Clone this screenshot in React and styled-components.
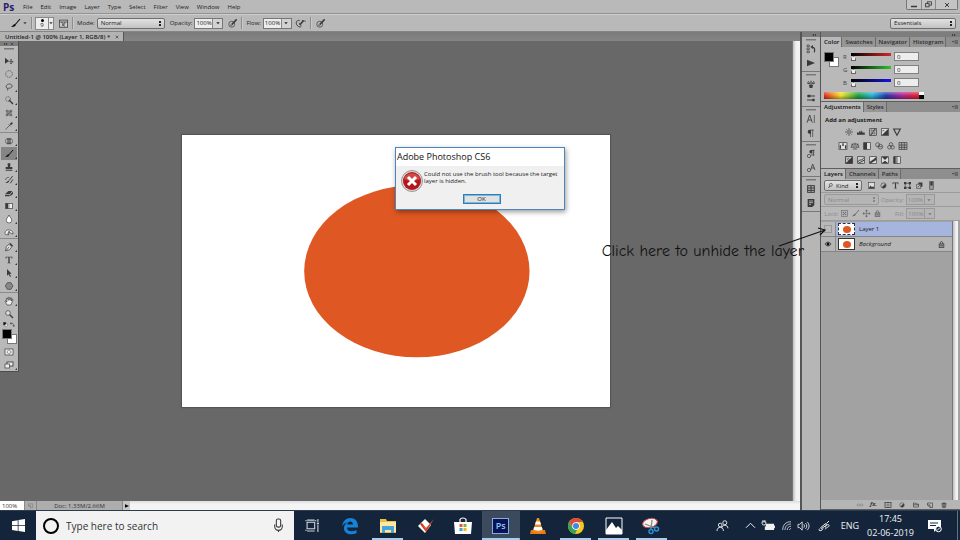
import React from "react";
import styled, { createGlobalStyle } from "styled-components";

const Global = createGlobalStyle`
  * { box-sizing: border-box; }
  html, body { margin: 0; height: 100%; overflow: hidden; }
  #root { height: 100%; }
  body { font-family: "Open Sans", "Noto Sans", sans-serif; font-size: 6px; line-height: 8px; color: #222; background: #666; }
  button, input, select { font: inherit; color: inherit; margin: 0; padding: 0; border: 0; border-radius: 0; background: none; min-width: 0; }
  select { appearance: none; }
`;

/* ---------- icons ---------- */

const Svg = styled.svg`
  display: block;
  flex: none;
  fill: none;
  stroke: currentColor;
  stroke-width: 1;
  overflow: visible;
`;

const F = { fill: "currentColor", stroke: "none" };

const glyphs = {
  move: <><path {...F} d="M0 1l6 5-6 4z" /><path d="M5.500 7h6.500M9 3.500v7" /><path {...F} d="M9 3l1.500 2h-3zM9 11l1.500-2h-3zM13 7l-2-1.500v3z" /></>,
  marquee: <circle cx="6" cy="6" r="5" strokeDasharray="2 1" />,
  lasso: <path strokeWidth="1.200" d="M3.500 8C0 6 2 1.500 6.500 1.500S12.500 6 8 7.500C5 8.500 3 7 3.500 8.500S5 10 3 11.500" />,
  wand: <><circle cx="4.500" cy="4.500" r="3.500" strokeDasharray="2 1" /><path strokeWidth="2" d="M6 6l6 6" /></>,
  crop: <><path d="M3 1v10M9 1v10M1 3h10M1 9h10" /><path strokeWidth=".6" d="M3 9l6-6M6 3v6M3 6h6" /></>,
  dropper: <><path strokeWidth="2.600" d="M8 4l3-3" /><path d="M5.500 3.500l3 3M7 5L2 10l-1 1.500" /></>,
  patch: <><rect x="1" y="3" width="10" height="6.500" rx="2" fill="#ccc" /><rect x="3.500" y="2" width="5" height="8.500" fill="currentColor" opacity=".6" /></>,
  brush: <><path strokeWidth="1.500" d="M12 0L6 7" /><path {...F} d="M6.500 6.500C7 9.500 4 11 0 10.500 3 9.500 3 6 6.500 6.500z" /></>,
  stamp: <path {...F} d="M4 .5h4v3L7.500 6H11v3H1V6h3.500L4 3.500zM1 10h10v1.500H1z" />,
  history: <><path strokeWidth="1.400" d="M11.500 0L6 7M12 5L8 11" /><path {...F} d="M6.500 7C6 10 3 11 0 10.500c3-.5 3-3.500 6.500-3.500z" /><path d="M1 6c0-3 2-4 5-4" /></>,
  eraser: <path {...F} d="M0 8l5-5h6L7 8zM0 9h7v2H0zM8 8l4-4v3l-4 4z" />,
  gradient: <><rect x="1" y="2" width="10" height="8" fill="#eee" /><path {...F} d="M1 2h4v8H1z" /><path d="M6.500 2v8" opacity=".5" /></>,
  drop: <path fill="#fff" d="M6 0c1 3 4 5 4 8a4 4 0 01-8 0c0-3 3-5 4-8z" />,
  sponge: <><path fill="#eee" d="M0 8c0-4 3-6 7-5s5 3 5 6l-5-2-3 1 2 2H1z" /><circle cx="6" cy="6" r="1" /></>,
  pen: <><path fill="#ddd" d="M1 12l1-7 4-3 4 4-3 4-6 2zM1 12l5-6" /><path strokeWidth="2" d="M7 .5l4.500 4.500" /></>,
  type: <path {...F} d="M1 1h10v3h-.7C10 2.500 9.500 2 8 2H7v7.500c0 .8.500 1 1.500 1v.5h-5v-.5c1 0 1.500-.2 1.500-1V2H4C2.500 2 2 2.500 1.700 4H1z" />,
  select: <path {...F} d="M3 0l7 7H7l2 4-1.500 1L5.500 8 3 10z" />,
  shape: <path fill="#888" d="M3.500 1h5.500L12 6l-3 5H3.500L.5 6z" />,
  hand: <path fill="#eee" d="M3 12L0 6l1-.5 2 2L2 2l1.500-.5L5 5V.5h1.500L7.500 5 8.500 1l1 .2V6l1.500-3 1 .5L10.500 8 9 12z" />,
  zoom: <><circle cx="4.500" cy="4.500" r="3.500" fill="#ddd" /><path strokeWidth="2" d="M7 7l5 5" /></>,
  mini: <><rect x="1" y="1" width="6" height="6" fill="#111" /><rect x="5" y="5" width="6" height="6" fill="#fff" /></>,
  swap: <path strokeWidth="1.500" d="M2 6V2l-1 2m1-2l2 1M2 3c5-1 7 2 7 7m-2-2l2 3 2-3" />,
  mask: <><rect x="0" y="1.500" width="12" height="9" fill="#eee" /><circle cx="6" cy="6" r="2.800" strokeDasharray="2 .8" /></>,
  screen: <><rect x="3" y="1.500" width="9" height="6" fill="#eee" strokeWidth="1.300" /><rect x="0" y="4.500" width="7" height="6" fill="#eee" /></>,
  panel: <><rect x=".5" y="1.500" width="11" height="9.500" fill="#ccc" /><path d="M1 4h10M3 4l3 3 2-3M4 7l4 3M4 10l4-4" /></>,
  pressure: <><circle cx="5" cy="7" r="4" strokeWidth=".9" /><path strokeWidth="2" d="M5 7.500l6.500-7" /><path d="M2.500 7.500l3 2" /></>,
  airbrush: <><path strokeWidth="1.200" d="M5 2C0 1 -1 6 2 9s5 1 5 1" /><path strokeWidth="2" d="M5 8l5-6" /><path d="M8 2l5 1M4 5l3 4" /></>,
  steps: <><path d="M0 0h3.500v2.500H0zM0 4.500h3.500V7H0zM0 9h3.500v2.500H0z" /><path strokeWidth="1.800" d="M8 3c4 1 4 4 3 8" /><path {...F} d="M5 3l4-3v6z" /></>,
  play: <path {...F} d="M0 1l12 5-12 5z" />,
  brushes: <><path {...F} d="M3 7h6l-1 5H4z" /><path strokeWidth="1.500" d="M6 7V1M4.500 6L2 2M7.500 6L10 2M0 4l3 2M12 4L9 6" /></>,
  sliders: <><path strokeWidth="1.500" d="M0 3h12M0 9h12" /><path {...F} d="M1 1h4v4H1zM8 7h3v4H8z" /></>,
  letter: <><path strokeWidth="1.300" d="M0 11.500L4 0l4 11.500M1.500 7.500h5" /><path d="M11 0v12" /></>,
  para: <><path {...F} d="M6 1H4a3 3 0 000 6h1v5h1z" /><path d="M6 1.500h4M8.500 1v11" /></>,
  paraStyle: <><path {...F} d="M8 0H6a2.500 2.500 0 000 5h1v4h1z" /><path strokeWidth="1.300" d="M7 .5h4M10 0v9" /><circle cx="3" cy="9" r="2.500" /></>,
  letterStyle: <><path strokeWidth="1.200" d="M5.500 9L8.500 0 12 9M7 6h4" /><circle cx="3" cy="9" r="2.500" /></>,
  boxes: <><rect x="1" y="1" width="10" height="10" strokeWidth="1.500" /><path strokeWidth="1.500" d="M1 4.500h10M1 8h10M6 1v10" /></>,
  note: <><path {...F} d="M1 0h10v9l-3 3H1z" /><path stroke="#ddd" d="M3 3h6M3 5.500h6M3 8h3" /></>,
  sun: <><circle cx="6" cy="6" r="2" /><path d="M6 0v3M6 9v3M0 6h3M9 6h3M2 2l2 2M8 8l2 2M10 2L8 4M4 8l-2 2" /></>,
  levels: <path {...F} d="M0 10V7l1-1 1 2 2-4 1 3 1-4 2 4 1-2 1 3 1-2 1 4z" />,
  curves: <><rect x="1" y="1" width="10" height="10" /><path strokeWidth=".5" d="M4 1v10M8 1v10M1 4h10M1 8h10" /><path strokeWidth="1.300" d="M1 11C8 10 4 2 11 1" /></>,
  exposure: <><rect x=".5" y="1" width="11" height="10" fill="#ddd" /><path {...F} d="M1 11L11 1v10z" /><path d="M2 4h3" /></>,
  triangle: <path strokeWidth="1.700" d="M1 1.500h10L6 11z" />,
  hue: <><rect x="0" y="1" width="12" height="10" fill="#ddd" /><path {...F} d="M1 5h2v5H1zM5 2h2v4H5zM9 5h2v5H9z" /></>,
  scales: <path d="M6 1v9M3 10.500h6M1 3h10M2 3L0 8h4zM10 3L8 8h4z" />,
  bw: <><rect x="1" y="1" width="10" height="10" fill="#ddd" /><path {...F} d="M1 1h5v10H1z" /></>,
  grade: <><rect x="1" y="1" width="10" height="10" fill="#ddd" /><path {...F} d="M1 1h3v10H1z" /><path {...F} opacity=".5" d="M4 1h3v10H4z" /></>,
  filter: <><circle cx="4" cy="4" r="3" /><circle cx="8" cy="7" r="3.500" /><path d="M5 7h6" /></>,
  mixer: <><circle cx="6" cy="3.500" r="2.600" /><circle cx="3.500" cy="8" r="2.600" /><circle cx="8.500" cy="8" r="2.600" /></>,
  grid: <><rect x="0" y="1" width="12" height="10" fill="#aaa" /><path d="M4 1v10M8 1v10M0 4.500h12M0 8h12" /></>,
  invert: <><rect x="1" y="1" width="10" height="10" strokeWidth="1.500" fill="#ddd" /><path {...F} d="M1 11L11 1v10z" /><circle cx="5" cy="5" r="1.500" /></>,
  poster: <><rect x="1" y="1" width="10" height="10" fill="#ccc" /><path strokeWidth="1.500" d="M1 9l3-3h3l4-4M2 11l4-2 5-3" /></>,
  thresh: <><rect x="1" y="1" width="10" height="10" fill="#ddd" /><path {...F} d="M1 9l4-3 2-1 4-4v5l-5 3-5 3z" /></>,
  selective: <><rect x="1" y="1" width="10" height="10" fill="#ddd" /><path {...F} d="M1 1h10L6 6zM1 11l5-4 5 4z" /></>,
  picture: <><rect x=".5" y="1" width="11" height="10" fill="#ddd" /><path {...F} d="M1 11l3-5 3 3 2-2 2 4z" /></>,
  half: <><circle cx="6" cy="6" r="4.500" /><path {...F} d="M9 3l-6 6a4 4 0 006-6z" /></>,
  frame: <><rect x="2" y="2" width="8" height="8" /><path {...F} d="M0 0h4v4H0zM8 0h4v4H8zM0 8h4v4H0zM8 8h4v4H8z" /></>,
  smart: <><path d="M1 4h7v7H1z" /><path {...F} d="M4 1h7v7H8V4H4z" /><path d="M3 9l4-4" /></>,
  toggle: <><rect x="3" y="-1" width="6" height="14" fill="#999" /><path {...F} d="M4 0h4v6H4z" /></>,
  checker: <><rect x="1" y="1" width="10" height="10" /><path {...F} d="M3 3h2v2H3zM7 3h2v2H7zM5 5h2v2H5zM3 7h2v2H3zM7 7h2v2H7z" /></>,
  cross: <><path d="M6 1v10M1 6h10" /><path {...F} d="M6-1l2.500 3h-5zM6 13l2.500-3h-5zM-1 6l3-2.500v5zM13 6l-3-2.500v5z" /></>,
  lock: <><rect x="2" y="5" width="8" height="6" fill="#999" strokeWidth="1.300" /><path strokeWidth="1.300" d="M4 5V3a2 2 0 014 0v2M4 8h4" /></>,
  eye: <><path strokeWidth="1.300" d="M0 6c3-5 9-5 12 0-3 5-9 5-12 0z" /><circle {...F} cx="6" cy="6" r="3" /></>,
  link: <><rect x="0" y="4" width="5.500" height="4" rx="2" /><rect x="6.500" y="4" width="5.500" height="4" rx="2" /></>,
  addmask: <><rect x="0" y="1" width="12" height="10" strokeWidth="1.500" /><circle cx="6" cy="6" r="2.500" /></>,
  folder: <path strokeWidth="1.300" d="M1 10V2h4l1 2h5v6zM1 5.500h10" />,
  page: <path strokeWidth="1.300" d="M1 2h10v9H6L1 6zM6 11V6H1" />,
  trash: <path strokeWidth="1.300" d="M2 4h8l-1 7H3zM1 3h10M4 1.500h4M5 5v5M7 5v5" />,
  menu: <><path {...F} d="M0 4h4L2 7z" /><path d="M5 3h7M5 5h7M5 7h7M5 9h7" strokeWidth=".8" /></>,
  chevL: <path {...F} d="M6 2v8L1 6zM12 2v8L7 6z" />,
  chevR: <path {...F} d="M0 2v8l5-4zM6 2v8l5-4z" />,
  caret: <path {...F} d="M1 4h10L6 10z" />,
  search: <><circle cx="7" cy="4.500" r="3.500" strokeWidth="1.500" /><path strokeWidth="2" d="M5 7l-4 5" /></>,
  x: <path strokeWidth="2" d="M2 2l8 8M10 2l-8 8" />,
  min: <path strokeWidth="3" d="M0 9h12" />,
  restore: <><rect x="4" y="1.500" width="7" height="5.500" strokeWidth="1.500" /><rect x="1" y="4.500" width="6" height="5.500" fill="#bbb" strokeWidth="1.500" /></>,
  windows: <path {...F} d="M0 2l5.300-.8v4.500H0zM6 1l6-.9v5.600H6zM0 6.400h5.300V11L0 10.200zM6 6.400h6V12l-6-.9z" />,
  mic: <><rect x="4" y="0" width="4" height="7.500" rx="1.500" /><path d="M2.500 5v2a3.500 3.500 0 007 0V5M6 10.500V12" /></>,
  taskview: <><rect x="1" y="3" width="7" height="6" /><path d="M1 1h7M1 11h7M0 1v1M9 1v1M0 10v1M11 0v3M11 5v7M10 4h2" /></>,
  people: <><circle cx="8.500" cy="3" r="2.200" /><circle cx="3.500" cy="5.500" r="2" /><path d="M5 9c.5-4 6.500-4.500 7 0M0 12c0-5.500 7-5.500 7 0" /></>,
  up: <path strokeWidth="1.300" d="M0 9l6-6 6 6" />,
  battery: <><path {...F} d="M3 4h9v7H2V7h1zM12 6h1v3h-1z" /><path d="M-1 2h4v2c0 2-4 2-4 0zM0 0v2M2 0v2" /></>,
  wifi: <path d="M1 12C1 5 5 1 12 1M4 12c0-5 3-8 8-8M7 12c0-3 2-5 5-5M10 12c0-1 1-2 2-2" />,
  volume: <path d="M0 4h2l3-3v10L2 8H0zM7 4c1 1 1 3 0 4M9 2.500c2 2 2 5 0 7M11 1c3 3 3 7 0 10" />,
  ink: <path strokeWidth="1.200" d="M2 8l6-5 1 2-6 4zM9 3l3-3M1 9c-3 3 2 4 4 0M7 10c3-3 6-3 5-5S7 6 8 8" />,
  action: <><path {...F} d="M0 0h13v9H9l-3 3V9H0z" /><path stroke="#16283f" d="M2 3h8M2 5.500h6" /><circle cx="10.500" cy="9" r="2.800" fill="#16283f" /><path d="M9 10.500l3-3" /></>,
};

const Icon = ({ name, size = 9, color = "#3a3a3a" }) => (
  <Svg width={size} height={size} viewBox="0 0 12 12" color={color} aria-hidden="true">{glyphs[name]}</Svg>
);

const AppGlyphs = {
  edge: <path fill="#1683d8" d="M0 8C1 3 4 0 8.500 0c5 0 7.500 4 7.500 8.500v1H5c0 4 5 5 9.500 2.500v3.200C8 18 1.500 15.500 2 9.500 2.300 7 4 5 6 4.200 3.500 4.500 1.300 6 0 8zm5.200-1.500H11C11 2.500 5.500 2.500 5.200 6.500z" />,
  explorer: <><path fill="#e9bf50" d="M0 1h6l1 2h9v12H0z" /><path fill="#ffe9a0" d="M0 4h16v10H0z" /><path fill="#45a5dc" d="M2 8h12v7h-3v-3H5v3H2z" /></>,
  check: <><path fill="#fff" d="M7 1l6 6-6 8-7-7z" /><path fill="#c8371b" d="M2 6l2-1 4 5 8-9-8 13z" /><path fill="#ff9a3c" d="M4 6l4 5 8-10-7 8-1 3z" /></>,
  store: <><path fill="#fff" d="M-1 4h18l-1 12H0z" /><path fill="none" stroke="#fff" strokeWidth="1.200" d="M5 4V1.500C6-.5 10-.5 11 1.500V4" /><path fill="#e9532d" d="M4.500 6h3v3h-3z" /><path fill="#80b82d" d="M8.500 6h3v3h-3z" /><path fill="#2ca5e0" d="M4.500 10h3v3h-3z" /><path fill="#f5b51d" d="M8.500 10h3v3h-3z" /></>,
  vlc: <><path fill="#e87c13" d="M1 12h14l1 4H0z" /><path fill="#f08a20" d="M7 0h2l4 13c-2 2-8 2-10 0z" /><path fill="#fff" d="M6 3.500h4l1 3H5zM4.200 9h7.600l.8 2.500c-2 1.500-7 1.500-9.200 0z" /></>,
  chrome: <><circle cx="8" cy="8" r="8" fill="#f5c923" /><path fill="#de4a3b" d="M1.100 4A8 8 0 0114.900 4H8L5 10z" /><path fill="#33a35a" d="M1.100 4l3.500 6L9 12l-2 4A8 8 0 011.100 4z" /><circle cx="8" cy="8" r="3.800" fill="#fff" /><circle cx="8" cy="8" r="3" fill="#4387e8" /></>,
  photos: <><path fill="none" stroke="#fff" d="M0 0h16v16H0z" /><path fill="#fff" d="M0 12l6-8 4 6 2-2 4 4v4H0z" /></>,
  snip: <><ellipse cx="7" cy="5" rx="7.500" ry="4.500" fill="#f4f1f1" stroke="#c64646" transform="rotate(-14 7 5)" /><path stroke="#888" strokeWidth="1.300" d="M2 6l10 4M9 2l-1 9" /><g fill="none" stroke="#2194d8" strokeWidth="1.500"><circle cx="8" cy="13.500" r="2" /><circle cx="13.500" cy="11" r="2" /></g></>,
};

/* ---------- shared controls ---------- */

const Screen = styled.div`
  position: relative;
  display: flex;
  flex-direction: column;
  height: 100vh;
  overflow: hidden;
`;

const Divider = styled.span`
  width: 2px;
  height: 12px;
  flex: none;
  background: #8d8d8d;
  border-right: 1px solid #c9c9c9;
  margin: 0 ${(p) => p.$gap}px;
`;

const PlainButton = styled.button`
  display: flex;
  align-items: center;
  justify-content: center;
  white-space: nowrap;
  flex: none;
`;

const Dropdown = styled.span`
  display: flex;
  align-items: center;
  flex: none;
  width: ${(p) => p.$w}px;
  height: 11px;
  border: 1px solid ${(p) => (p.$off ? "#999" : "#6f6f6f")};
  border-radius: 2px;
  background: ${(p) => (p.$off ? "#b5b5b5" : "linear-gradient(#e2e2e2, #c2c2c2)")};
  color: ${(p) => (p.$off ? "#888" : "#222")};
  select { flex: 1; height: 100%; padding-left: ${(p) => (p.$tight ? 0 : 3)}px; opacity: 1; }
  &::after {
    content: "";
    width: 2px;
    height: 5px;
    margin-right: 3px;
    background: linear-gradient(currentColor 2px, transparent 2px 3px, currentColor 3px);
    pointer-events: none;
  }
`;

const ValueBox = styled.span`
  display: flex;
  flex: none;
  height: 11px;
  border: 1px solid ${(p) => (p.$off ? "#999" : "#777")};
  background: ${(p) => (p.$off ? "#b5b5b5" : "#ededed")};
  color: ${(p) => (p.$off ? "#888" : "#222")};
  input { width: 17px; padding-left: 1px; }
  button { width: 10px; border-left: 1px solid ${(p) => (p.$off ? "#999" : "#888")}; background: ${(p) => (p.$off ? "#b5b5b5" : "#d2d2d2")}; }
`;

const Percent = ({ id, off }) => (
  <ValueBox $off={off}>
    <input id={id} defaultValue="100%" disabled={off} />
    <PlainButton aria-label="Open slider"><Icon name="caret" size={4} color={off ? "#777" : "#222"} /></PlainButton>
  </ValueBox>
);

/* ---------- menu and options bars ---------- */

const MenuBar = styled.header`
  display: flex;
  align-items: center;
  flex: none;
  height: 14px;
  padding-left: 3px;
  background: #b9b9b9;
  border-bottom: 1px solid #929292;
`;

const Brand = styled.strong`
  width: 20px;
  font-size: 10px;
  line-height: 12px;
  color: #29206b;
`;

const Menus = styled.nav`
  display: flex;
  flex: 1;
  gap: 8px;
`;

const WindowButtons = styled.div`
  display: flex;
  align-self: flex-start;
  height: 10px;
  margin-right: 2px;
  border: 1px solid #777;
  border-top: 0;
  border-radius: 0 0 2px 2px;
  background: #c4c4c4;
  button { width: 14px; }
  button + button { border-left: 1px solid #888; }
  button:last-child { width: 22px; }
`;

const OptionsBar = styled.div`
  display: flex;
  align-items: center;
  flex: none;
  height: 18px;
  padding: 0 4px 0 9px;
  background: #b9b9b9;
  border-top: 1px solid #cfcfcf;
  border-bottom: 1px solid #858585;
  label { margin: 0 2px 0 3px; }
`;

const BrushPreset = styled.div`
  display: flex;
  flex: none;
  width: 19px;
  height: 13px;
  border: 1px solid #888;
  background: #ececec;
  button { width: 5px; border-left: 1px solid #888; }
`;

const BrushTip = styled.span`
  display: flex;
  flex: 1;
  flex-direction: column;
  align-items: center;
  line-height: 7px;
  &::before { content: ""; width: 3px; height: 3px; margin-top: 1px; border-radius: 50%; background: #000; }
`;

const Slot = styled.span`
  display: flex;
  justify-content: center;
  align-items: center;
  flex: none;
  width: ${(p) => p.$w}px;
`;

const Spring = styled.span`
  flex: 1;
`;

/* ---------- document area ---------- */

const Workspace = styled.main`
  display: flex;
  flex: 1;
  min-height: 0;
`;

const DocumentColumn = styled.section`
  display: flex;
  flex: 1;
  flex-direction: column;
  min-width: 0;
`;

const TabStrip = styled.div`
  display: flex;
  flex: none;
  height: 9px;
  background: linear-gradient(#7b7b7b, #858585);
`;

const DocumentTab = styled.div`
  display: flex;
  align-items: center;
  gap: 5px;
  padding: 0 4px 0 5px;
  background: #b3b3b3;
  border-right: 1px solid #555;
  font-weight: 600;
  white-space: nowrap;
`;

const Viewport = styled.div`
  position: relative;
  display: flex;
  flex: 1;
  min-height: 0;
  background: #686868;
`;

const Pasteboard = styled.div`
  display: flex;
  flex: 1;
  align-items: center;
  justify-content: center;
`;

const Artboard = styled.svg`
  width: 54%;
  background: #fff;
  box-shadow: 0 0 1px 1px #555;
`;

const VScroll = styled.div`
  width: 8px;
  flex: none;
  background: linear-gradient(90deg, #bdbdbd, #f1f1f1 3px, #f4f4f4);
  border-left: 1px solid #777;
`;

const ListScroll = styled(VScroll)`
  border-right: 2px solid #a2a2a2;
`;

const StatusBar = styled.footer`
  display: flex;
  flex: none;
  height: 9px;
  background: linear-gradient(#ddd, #f4f4f4 3px);
  color: #333;
  input { width: 24px; padding-left: 2px; background: #fff; }
`;

const StatusPart = styled.div`
  display: flex;
  align-items: center;
  justify-content: center;
  width: ${(p) => p.$w}px;
  background: ${(p) => p.$bg || "#adadad"};
  border-left: 1px solid #888;
`;

/* ---------- tool palette ---------- */

const Palette = styled.aside`
  position: absolute;
  left: 0;
  top: 0;
  width: 19px;
  background: #b9b9b9;
  border-right: 1px solid #4d4d4d;
  border-bottom: 1px solid #4d4d4d;
`;

const DarkHead = styled.div`
  display: flex;
  align-items: center;
  justify-content: ${(p) => p.$align || "space-between"};
  flex: none;
  height: 5px;
  padding: 0 4px;
  background: #7d7d7d;
`;

const Grip = styled.div`
  width: 10px;
  height: 2px;
  margin: 2px auto ${(p) => p.$after}px;
  border-top: 1px solid #777;
  background: #999;
`;

const ToolGroup = styled.div`
  padding-top: 1px;
  & + & { border-top: 1px solid #8a8a8a; }
`;

const Tool = styled.button`
  position: relative;
  display: flex;
  align-items: center;
  justify-content: center;
  width: 16px;
  height: 13px;
  margin: 0 1px;
  background: ${(p) => (p.$on ? "#858585" : "none")};
  &::after { content: ${(p) => (p.$more ? '""' : "none")}; position: absolute; right: 0; bottom: 1px; border: 1px solid #333; border-top-color: transparent; border-left-color: transparent; }
`;

const Swatches = styled.div`
  display: grid;
  grid-template: repeat(3, 5px) / repeat(3, 5px);
  width: 15px;
  margin: ${(p) => p.$margin};
`;

const Swatch = styled.button`
  grid-area: ${(p) => (p.$front ? "1 / 1 / 3 / 3" : "2 / 2 / 4 / 4")};
  background: ${(p) => (p.$front ? "#000" : "#fff")};
  border: 1px solid #777;
  z-index: ${(p) => (p.$front ? 1 : 0)};
`;

const MiniRow = styled.div`
  display: flex;
  justify-content: space-between;
  padding: 2px 3px;
  height: 9px;
`;

/* ---------- docks ---------- */

const IconDock = styled.aside`
  display: flex;
  flex-direction: column;
  width: 20px;
  flex: none;
  background: #b6b6b6;
  border-left: 2px solid #555;
`;

const DockGroup = styled.div`
  display: flex;
  flex-direction: column;
  align-items: center;
  height: 35px;
  border-bottom: 1px solid #777;
  button { height: 14px; width: 16px; }
`;

const Panels = styled.aside`
  display: flex;
  flex-direction: column;
  width: 140px;
  flex: none;
  border-left: 1px solid #555;
  background: #a2a2a2;
`;

const Panel = styled.section`
  display: flex;
  flex-direction: column;
  flex: ${(p) => (p.$grow ? "1" : "none")};
  height: ${(p) => (p.$h ? p.$h + "px" : "auto")};
  border-bottom: 1px solid #5e5e5e;
`;

const Tabs = styled.div`
  display: flex;
  flex: none;
  height: 10px;
  background: #8e8e8e;
`;

const Tab = styled.button`
  padding: 0 2px 0 3px;
  font-weight: 600;
  line-height: 9px;
  white-space: nowrap;
  color: ${(p) => (p.$on ? "#111" : "#2e2e2e")};
  background: ${(p) => (p.$on ? "#b9b9b9" : "#969696")};
  border-right: 1px solid #6b6b6b;
`;

const PanelBody = styled.div`
  flex: 1;
  background: #b9b9b9;
`;

const PanelTabs = ({ names }) => (
  <Tabs role="tablist">
    {names.map((n, i) => <Tab key={n} role="tab" aria-selected={i === 0} $on={i === 0}>{n}</Tab>)}
    <Spring />
    <Slot $w={10}><Icon name="menu" size={6} color="#333" /></Slot>
  </Tabs>
);

const ColorBody = styled(PanelBody)`
  display: grid;
  grid-template-columns: 18px 1fr;
  grid-template-rows: 39px 1fr;
  row-gap: 3px;
  padding: 3px 3px 2px;
`;

const ChannelRow = styled.div`
  display: grid;
  grid-template-columns: 9px 40px 28px;
  height: 13px;
  align-items: center;
  label { padding-left: 1px; color: #444; }
  input[type="text"] { height: 9px; margin-left: 3px; width: 25px; border: 1px solid #808080; background: #ededed; padding-left: 2px; }
`;

const Channel = styled.input`
  appearance: none;
  width: 40px;
  height: 9px;
  background: linear-gradient(90deg, #000, ${(p) => p.$color}) 0 1px / 100% 3px no-repeat;
  &::-webkit-slider-thumb { appearance: none; width: 5px; height: 5px; margin-top: 4px; background: #eee; border: 1px solid #666; clip-path: polygon(50% 0, 100% 50%, 100% 100%, 0 100%, 0 50%); }
`;

const Spectrum = styled.div`
  grid-column: 1 / -1;
  width: 100px;
  height: 7px;
  background:
    linear-gradient(#fff 50%, #000 50%) right / 5px 100% no-repeat,
    linear-gradient(rgba(255,255,255,.35), transparent 50%, rgba(0,0,0,.35)),
    linear-gradient(90deg, #e12a22, #f3df27 17%, #20a040 34%, #28b6d4 48%, #283caa 62%, #b0259a 78%, #dd2434 92%);
`;

const AdjustRow = styled.div`
  display: flex;
  justify-content: center;
  gap: 1px;
  height: 14px;
  align-items: center;
  width: 84px;
  margin-left: 10px;
  button { width: 11px; }
`;

const Heading = styled.h2`
  margin: 0;
  padding: 3px 4px 0;
  font-size: 6px;
  line-height: 10px;
  font-weight: 700;
`;

const LayerRowBar = styled.div`
  display: flex;
  align-items: center;
  height: 14px;
  padding: 0 3px;
  border-bottom: 1px solid #9c9c9c;
  color: ${(p) => (p.$off ? "#8a8a8a" : "#333")};
  label { margin: 0 2px; }
`;

const LayerList = styled.div`
  display: flex;
  flex: 1;
  background: #a2a2a2;
`;

const Layers = styled.ul`
  flex: 1;
  margin: 0;
  padding: 1px 0 0;
  list-style: none;
`;

const Layer = styled.li`
  display: flex;
  align-items: center;
  height: 15px;
  padding-right: 7px;
  border-bottom: 1px solid #858585;
  background: ${(p) => (p.$on ? "linear-gradient(90deg, #b9b9b9 15px, #a5b5dd 15px)" : "#b5b5b5")};
  font-style: ${(p) => (p.$italic ? "italic" : "normal")};
`;

const EyeBox = styled.button`
  display: flex;
  align-items: center;
  justify-content: center;
  width: 15px;
  height: 100%;
  border-right: 1px solid #8c8c8c;
  &::before { content: ${(p) => (p.$empty ? '""' : "none")}; width: 6px; height: 6px; border: 1px solid #999; }
`;

const Thumb = styled.span`
  display: flex;
  align-items: center;
  justify-content: center;
  width: 17px;
  height: 12px;
  margin: 0 4px 0 2px;
  background: #fff;
  border: 1px ${(p) => (p.$on ? "dashed" : "solid")} #333;
  &::after { content: ""; width: 8px; height: 7px; border-radius: 50%; background: #df5823; }
`;

const PanelFooter = styled.footer`
  display: flex;
  align-items: center;
  justify-content: flex-end;
  gap: 1px;
  flex: none;
  height: 9px;
  padding-right: 10px;
  background: #b5b5b5;
  color: #333;
  button { width: 13px; font-style: italic; font-weight: 700; line-height: 7px; }
`;

/* ---------- overlays ---------- */

const Dialog = styled.div`
  position: absolute;
  left: 50%;
  top: 147px;
  width: 170px;
  transform: translateX(-50%);
  background: #f0f0f0;
  border: 1px solid #4d86bd;
  box-shadow: 1px 2px 5px rgba(0, 0, 0, .4);
`;

const DialogTitle = styled.h1`
  margin: 0;
  padding: 0 1px;
  background: #fff;
  font-size: 9px;
  font-weight: 400;
  line-height: 18px;
  color: #111;
`;

const DialogBody = styled.div`
  display: flex;
  gap: 1px;
  padding: 3px 4px 0 5px;
  line-height: 7px;
  svg { flex: none; }
  p { margin: 2px 0 0; }
`;

const DialogActions = styled.div`
  display: flex;
  justify-content: center;
  padding: 1px 0 5px 3px;
  button { width: 38px; height: 10px; border: 1px solid #2a7fb8; background: #e1e1e1; box-shadow: inset 0 0 0 1px #7db8dc; line-height: 8px; }
`;

const Note = styled.div`
  position: absolute;
  right: 133px;
  top: 226px;
  padding-right: 23px;
  color: #111;
  pointer-events: none;
`;

const NoteText = styled.span`
  display: block;
  font-family: "Comic Sans MS", "Comic Neue", "Open Sans", sans-serif;
  font-size: 16px;
  line-height: 18px;
  padding-top: 16px;
  white-space: nowrap;
`;

const Arrow = styled.svg`
  position: absolute;
  right: 0;
  top: 0;
`;

/* ---------- taskbar ---------- */

const Taskbar = styled.footer`
  display: flex;
  align-items: stretch;
  flex: none;
  height: 30px;
  background: #14253b;
  color: #f1f1f1;
  border-top: 1px solid #2d3b4c;
`;

const SearchField = styled.label`
  display: flex;
  align-items: center;
  width: 258px;
  padding: 0 9px 0 7px;
  background: #f2f2f2;
  color: #333;
  input { flex: 1; margin-left: 7px; font-size: 10px; line-height: 14px; outline: 0; }
  input::placeholder { color: #333; opacity: 1; }
`;

const AppStrip = styled.div`
  display: flex;
  width: 376px;
`;

const TaskItem = styled.button`
  display: flex;
  align-items: center;
  justify-content: center;
  flex: 1;
  background-color: ${(p) => (p.$active ? "#3b4a5c" : "transparent")};
  background-image: ${(p) => (p.$open ? "linear-gradient(#a9cdea, #a9cdea)" : "none")};
  background-size: ${(p) => (p.$active ? "100%" : "31px")} 2px;
  background-position: bottom;
  background-repeat: no-repeat;
`;

const PsTile = styled.span`
  width: 17px;
  height: 16px;
  border: 1px solid #7fb0e0;
  background: #0b1256;
  color: #8ec5f5;
  font-size: 9px;
  font-weight: 600;
  line-height: 14px;
`;

const Tray = styled.div`
  display: flex;
  align-items: center;
  padding-right: 2px;
  font-size: 9px;
  button { height: 100%; }
`;

const Clock = styled.time`
  width: 55px;
  margin-right: 2px;
  text-align: center;
  line-height: 14px;
`;

const TrayEdge = styled.span`
  width: 1px;
  height: 100%;
  margin-left: 9px;
  background: #65717f;
`;

const AppIcon = ({ name }) => (
  <svg width="16" height="16" viewBox="0 0 16 16" overflow="visible" aria-hidden="true">{AppGlyphs[name]}</svg>
);

/* ---------- data ---------- */

const toolGroups = [
  ["move", "marquee", "lasso", "wand", "crop", "dropper"],
  ["patch", "brush", "stamp", "history", "eraser", "gradient", "drop", "sponge"],
  ["pen", "type", "select", "shape"],
  ["hand", "zoom"],
];
const dockGroups = [["steps", "play"], ["brushes", "sliders"], ["letter", "para"], ["paraStyle", "letterStyle"], ["boxes", "note"]];
const adjustments = [
  ["sun", "levels", "curves", "exposure", "triangle"],
  ["hue", "scales", "bw", "filter", "mixer", "grid"],
  ["invert", "poster", "thresh", "selective", "grade"],
];
const apps = [
  { name: "edge" }, { name: "explorer", open: true }, { name: "check" }, { name: "store" },
  { name: "ps", open: true, active: true }, { name: "vlc" }, { name: "chrome", open: true },
  { name: "photos", open: true }, { name: "snip", open: true },
];
const tray = [["people", 38, 11], ["up", 18, 9], ["battery", 18, 11], ["wifi", 18, 9], ["volume", 16, 10], ["ink", 26, 10]];

const ColorPair = ({ margin }) => (
  <Swatches $margin={margin}>
    <Swatch $front aria-label="Foreground color" />
    <Swatch aria-label="Background color" />
  </Swatches>
);

export default function App() {
  return (
    <Screen>
      <Global />
      <MenuBar>
        <Brand>Ps</Brand>
        <Menus>
          {["File", "Edit", "Image", "Layer", "Type", "Select", "Filter", "View", "Window", "Help"].map((m) => (
            <PlainButton key={m}>{m}</PlainButton>
          ))}
        </Menus>
        <WindowButtons>
          <PlainButton aria-label="Minimize"><Icon name="min" size={6} /></PlainButton>
          <PlainButton aria-label="Restore"><Icon name="restore" size={7} /></PlainButton>
          <PlainButton aria-label="Close"><Icon name="x" size={6} /></PlainButton>
        </WindowButtons>
      </MenuBar>

      <OptionsBar>
        <Slot $w={12}><Icon name="brush" size={9} color="#111" /></Slot>
        <Slot $w={8}><Icon name="caret" size={4} /></Slot>
        <Divider $gap={2} />
        <BrushPreset>
          <BrushTip>9</BrushTip>
          <PlainButton aria-label="Brush presets"><Icon name="caret" size={4} /></PlainButton>
        </BrushPreset>
        <Slot $w={18}><Icon name="panel" size={9} /></Slot>
        <Divider $gap={0} />
        <label htmlFor="mode">Mode:</label>
        <Dropdown $w={68}><select id="mode"><option>Normal</option></select></Dropdown>
        <Slot $w={2} />
        <label htmlFor="opacity">Opacity:</label>
        <Percent id="opacity" />
        <Slot $w={18}><Icon name="pressure" size={9} /></Slot>
        <Divider $gap={0} />
        <label htmlFor="flow">Flow:</label>
        <Percent id="flow" />
        <Slot $w={18}><Icon name="airbrush" size={9} /></Slot>
        <Divider $gap={0} />
        <Slot $w={18}><Icon name="pressure" size={9} /></Slot>
        <Spring />
        <Dropdown $w={66}><select aria-label="Workspace"><option>Essentials</option></select></Dropdown>
      </OptionsBar>

      <Workspace>
        <DocumentColumn>
          <TabStrip>
            <DocumentTab>
              Untitled-1 @ 100% (Layer 1, RGB/8) *
              <PlainButton aria-label="Close document"><Icon name="x" size={4} /></PlainButton>
            </DocumentTab>
          </TabStrip>
          <Viewport>
            <Palette>
              <DarkHead><Icon name="chevR" size={4} /><Icon name="x" size={4} /></DarkHead>
              <Grip $after={3} />
              {toolGroups.map((g) => (
                <ToolGroup key={g[0]}>
                  {g.map((t) => (
                    <Tool key={t} aria-label={t} $on={t === "brush"} $more={t !== "move" && t !== "zoom"}>
                      <Icon name={t} size={8} color={t === "brush" ? "#111" : undefined} />
                    </Tool>
                  ))}
                </ToolGroup>
              ))}
              <MiniRow><Icon name="mini" size={5} /><Icon name="swap" size={5} /></MiniRow>
              <ColorPair margin="0 auto 1px 2px" />
              <Tool aria-label="Quick mask"><Icon name="mask" size={8} /></Tool>
              <Tool aria-label="Screen mode" $more><Icon name="screen" size={8} /></Tool>
            </Palette>
            <Pasteboard>
              <Artboard viewBox="0 0 427 271" role="img" aria-label="Orange ellipse">
                <ellipse cx="234.500" cy="136" rx="112.500" ry="86" fill="#df5823" />
              </Artboard>
            </Pasteboard>
            <VScroll />
          </Viewport>
          <StatusBar>
            <input aria-label="Zoom level" defaultValue="100%" />
            <StatusPart $w={12}><Icon name="page" size={5} color="#777" /></StatusPart>
            <StatusPart $w={86}>Doc: 1.33M/2.66M</StatusPart>
            <StatusPart $w={8} $bg="#c6c6c6"><Icon name="play" size={4} color="#000" /></StatusPart>
          </StatusBar>
        </DocumentColumn>

        <IconDock>
          <DarkHead $align="flex-end"><Icon name="chevL" size={4} /></DarkHead>
          {dockGroups.map((g) => (
            <DockGroup key={g[0]}>
              <Grip $after={1} />
              {g.map((n) => <PlainButton key={n} aria-label={n}><Icon name={n} size={8} /></PlainButton>)}
            </DockGroup>
          ))}
        </IconDock>

        <Panels>
          <DarkHead $align="flex-end"><Icon name="chevR" size={4} /></DarkHead>
          <Panel $h={65}>
            <PanelTabs names={["Color", "Swatches", "Navigator", "Histogram"]} />
            <ColorBody>
              <ColorPair margin="2px 0 0" />
              <div>
                {[["R", "#d02a2a"], ["G", "#2cc42c"], ["B", "#1515e0"]].map(([c, color]) => (
                  <ChannelRow key={c}>
                    <label htmlFor={"ch" + c}>{c}</label>
                    <Channel id={"ch" + c} type="range" min="0" max="255" defaultValue="0" $color={color} />
                    <input type="text" aria-label={c + " value"} defaultValue="0" />
                  </ChannelRow>
                ))}
              </div>
              <Spectrum />
            </ColorBody>
          </Panel>
          <Panel $h={67}>
            <PanelTabs names={["Adjustments", "Styles"]} />
            <PanelBody>
              <Heading>Add an adjustment</Heading>
              {adjustments.map((row) => (
                <AdjustRow key={row[0]}>
                  {row.map((n) => <PlainButton key={n} aria-label={n}><Icon name={n} size={8} /></PlainButton>)}
                </AdjustRow>
              ))}
            </PanelBody>
          </Panel>
          <Panel $grow>
            <PanelTabs names={["Layers", "Channels", "Paths"]} />
            <div>
              <PanelBody>
                <LayerRowBar>
                  <Dropdown $w={38} $tight>
                    <Slot $w={11}><Icon name="search" size={5} /></Slot>
                    <select aria-label="Filter kind"><option>Kind</option></select>
                  </Dropdown>
                  <Slot $w={3} />
                  {["picture", "half", "type", "frame", "smart", "toggle"].map((n) => (
                    <Slot key={n} $w={12}><Icon name={n} size={7} /></Slot>
                  ))}
                </LayerRowBar>
                <LayerRowBar $off>
                  <Dropdown $w={55} $off><select aria-label="Blend mode" disabled><option>Normal</option></select></Dropdown>
                  <label htmlFor="layerOpacity">Opacity:</label>
                  <Percent id="layerOpacity" off />
                </LayerRowBar>
                <LayerRowBar $off>
                  <Slot $w={15}>Lock:</Slot>
                  {["checker", "brush", "cross", "lock"].map((n) => (
                    <Slot key={n} $w={11}><Icon name={n} size={7} color="#666" /></Slot>
                  ))}
                  <Slot $w={10} />
                  <label htmlFor="fill">Fill:</label>
                  <Percent id="fill" off />
                </LayerRowBar>
              </PanelBody>
            </div>
            <LayerList>
              <Layers>
                <Layer $on>
                  <EyeBox $empty aria-label="Show Layer 1" />
                  <Thumb $on />
                  Layer 1
                </Layer>
                <Layer $italic>
                  <EyeBox aria-label="Hide Background"><Icon name="eye" size={6} color="#111" /></EyeBox>
                  <Thumb />
                  Background
                  <Spring />
                  <Icon name="lock" size={7} />
                </Layer>
              </Layers>
              <ListScroll />
            </LayerList>
            <PanelFooter>
              <PlainButton aria-label="Link layers"><Icon name="link" size={6} color="#777" /></PlainButton>
              <PlainButton>fx.</PlainButton>
              {["addmask", "half", "folder", "page", "trash"].map((n) => (
                <PlainButton key={n} aria-label={n}><Icon name={n} size={6} /></PlainButton>
              ))}
            </PanelFooter>
          </Panel>
        </Panels>
      </Workspace>

      <Taskbar>
        <Slot as="button" $w={36} aria-label="Start"><Icon name="windows" size={13} color="#fff" /></Slot>
        <SearchField>
          <svg width="16" height="16" viewBox="0 0 16 16" aria-hidden="true"><circle cx="8" cy="8" r="7" fill="none" stroke="#000" strokeWidth="2" /></svg>
          <input aria-label="Search" placeholder="Type here to search" />
          <Icon name="mic" size={13} />
        </SearchField>
        <AppStrip>
          <TaskItem aria-label="Task view"><Icon name="taskview" size={13} color="#ccd3da" /></TaskItem>
          {apps.map((a) => (
            <TaskItem key={a.name} aria-label={a.name} $open={a.open} $active={a.active}>
              {a.name === "ps" ? <PsTile>Ps</PsTile> : <AppIcon name={a.name} />}
            </TaskItem>
          ))}
        </AppStrip>
        <Spring />
        <Tray>
          {tray.map(([n, w, s]) => <Slot as="button" key={n} $w={w} aria-label={n}><Icon name={n} size={s} color="#f1f1f1" /></Slot>)}
          <Slot as="button" $w={26}>ENG</Slot>
          <Clock>17:45<br />02-06-2019</Clock>
          <Slot as="button" $w={28} aria-label="Notifications"><Icon name="action" size={12} color="#fff" /></Slot>
          <TrayEdge />
        </Tray>
      </Taskbar>

      <Dialog role="alertdialog" aria-labelledby="dialog-title">
        <DialogTitle id="dialog-title">Adobe Photoshop CS6</DialogTitle>
        <DialogBody>
          <svg width="22" height="24" viewBox="0 0 22 24" aria-hidden="true">
            <circle cx="11" cy="12" r="10.500" fill="#d8d8d8" stroke="#999" />
            <circle cx="11" cy="12" r="9" fill="#b5161c" />
            <path d="M3 10a8.500 8.500 0 0116 0q-8 4-16 0z" fill="#d04a48" />
            <path d="M7 8l8 8M15 8l-8 8" stroke="#fff" strokeWidth="3" />
          </svg>
          <p>Could not use the brush tool because the target layer is hidden.</p>
        </DialogBody>
        <DialogActions><button>OK</button></DialogActions>
      </Dialog>

      <Note>
        <NoteText>Click here to unhide the layer</NoteText>
        <Arrow width="50" height="24" viewBox="0 0 50 24" fill="none" stroke="#111" strokeWidth="1.200" aria-hidden="true">
          <path d="M2 20L48 4M41 2l7 2-5 5" />
        </Arrow>
      </Note>
    </Screen>
  );
}
